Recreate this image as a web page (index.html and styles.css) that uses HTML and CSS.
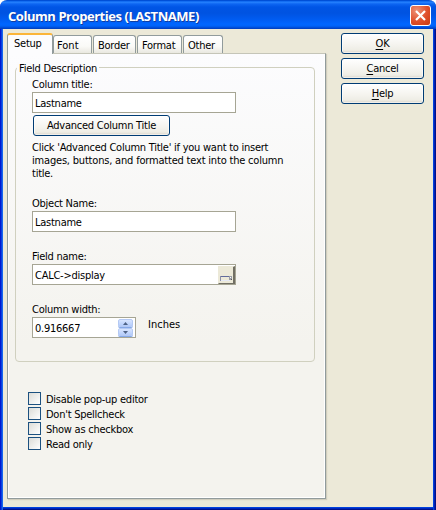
FILE: index.html
```html
<!DOCTYPE html>
<html lang="en">
<head>
<meta charset="utf-8">
<title>Column Properties (LASTNAME)</title>
<link rel="stylesheet" href="styles.css">
</head>
<body>
<div class="window">
  <header class="titlebar">
    <h1>Column Properties (LASTNAME)</h1>
    <button class="close" aria-label="Close"><svg width="13" height="13" viewBox="0 0 13 13"><path d="M2 2L11 11M11 2L2 11" stroke="#fff" stroke-width="2.2"/></svg></button>
  </header>
  <div class="content">
    <main>
      <nav class="tabs">
        <div class="tab active">Setup</div>
        <div class="tab font">Font</div>
        <div class="tab border">Border</div>
        <div class="tab format">Format</div>
        <div class="tab other">Other</div>
      </nav>
      <section class="panel">
        <div class="group">
          <div class="legend"><span>Field Description</span></div>
          <label class="label">Column title:</label>
          <div class="field">Lastname</div>
          <button class="btn advanced">Advanced Column Title</button>
          <p class="hint">Click 'Advanced Column Title' if you want to insert<br><span>images, buttons, and formatted text into the column</span><br>title.</p>
          <label class="label object">Object Name:</label>
          <div class="field">Lastname</div>
          <label class="label spaced">Field name:</label>
          <div class="field picker">CALC-&gt;display
            <span class="browse"><svg width="13" height="7" viewBox="0 0 13 7"><path d="M0 1.5H10" stroke="#626b9b"/><path d="M.5 1V6" stroke="#8c90a5"/><path d="M1 5.5H10" stroke="#e5e9f5"/><path d="M9 1h3v4h-3z" fill="#9a9da6"/><path d="M10 2h1v1h-1z" fill="#fff"/><path d="M11 4h1v1h-1z" fill="#555"/></svg></span>
          </div>
          <label class="label spaced">Column width:</label>
          <div class="width-row">
            <div class="field spinner">0.916667
              <span class="spin"><i><svg width="5" height="3" viewBox="0 0 5 3"><path d="M0 3L2.5 0L5 3z" fill="#4d6185"/></svg></i><i><svg width="5" height="3" viewBox="0 0 5 3"><path d="M0 0L2.5 3L5 0z" fill="#4d6185"/></svg></i></span>
            </div>
            <span class="unit">Inches</span>
          </div>
        </div>
        <div class="checks">
          <label><b></b><span>Disable pop-up editor</span></label>
          <label><b></b><span>Don't Spellcheck</span></label>
          <label><b></b><span>Show as checkbox</span></label>
          <label><b></b><span>Read only</span></label>
        </div>
      </section>
    </main>
    <aside>
      <button class="btn"><span><u>O</u>K</span></button>
      <button class="btn"><span><u>C</u>ancel</span></button>
      <button class="btn"><span><u>H</u>elp</span></button>
    </aside>
  </div>
</div>
</body>
</html>
```
FILE: styles.css
```css
* { box-sizing: border-box; }
body { margin: 0; background: #fff; font: 11px/13px "DejaVu Sans Condensed", "DejaVu Sans", sans-serif; font-stretch: condensed; letter-spacing: -0.25px; color: #000; }
button { font: inherit; letter-spacing: inherit; color: inherit; padding: 0; }
svg { display: block; }
.window { width: 436px; height: 510px; border-radius: 7px 7px 0 0; overflow: hidden; background: linear-gradient(90deg, #0019cf 0 1px, #0a3fe0 1px 2px, #1667ee 2px 3px, transparent 3px 433px, #0040dd 433px 434px, #0020b4 434px 435px, #00108a 435px), linear-gradient(#0042dd 0 1px, #0026bb 1px 2px, #00138c 2px) 0 507px / 436px 3px no-repeat, #ece9d8; }
.titlebar { height: 29px; display: flex; justify-content: space-between; padding: 5px 5px 0 8px; background: linear-gradient(#0046c8 0, #0058e6 1px, #2884ff 2px, #0d65f2 4px, #0055e5 7px, #0053e1 13px, #005bf0 19px, #0066ff 24px, #0063f8 26px, #0048d0 28px, #003db9 29px); }
h1 { margin: 0; font: bold 13px/22px "Open Sans", sans-serif; font-stretch: normal; letter-spacing: -0.45px; color: #fff; text-shadow: 1px 1px #123ea0; }
.close { width: 21px; height: 21px; border: 1px solid #fff; border-radius: 3px; display: grid; place-items: center; background: radial-gradient(circle at 30% 25%, #ed9278, #df4f2b 55%, #c93a11); }
.content { display: flex; height: 478px; justify-content: space-between; padding: 4px 12px 0 7px; }
main { width: 320px; }
.tabs { display: flex; height: 20px; align-items: flex-end; }
.tab { height: 18px; border: 1px solid #919b9c; border-bottom: 0; border-radius: 3px 3px 0 0; background: linear-gradient(#fff, #fafaf7 60%, #e9e8e0); padding: 3px 0 0 3px; margin-right: 1px; white-space: nowrap; }
.active { width: 46px; height: 21px; margin: 0 0 -1px; padding: 2px 0 0 6px; position: relative; background: #fcfcfe; border-top: 2px solid #fbb53a; }
.font { width: 39px; letter-spacing: 0; }
.border { width: 43px; padding-left: 4px; }
.format { width: 45px; padding-left: 4px; }
.other { width: 40px; padding-left: 4px; }
.panel { width: 319px; height: 446px; border: 1px solid #919b9c; border-top-color: #c5c5b8; background: linear-gradient(#fcfcfe, #f4f3ee 65%); box-shadow: inset -1px -1px #fff, inset 1px 0 #fff, 1px 1px 1px #d0cdbd; padding: 13px 0 0 7px; }
.group { width: 300px; height: 295px; border: 1px solid #d0d0bf; border-radius: 4px; padding-left: 16px; }
.legend { height: 13px; margin: -6px 0 0 -15px; }
.legend span { display: inline-block; height: 13px; padding: 0 2px; background: #fbfbfd; }
.label { display: block; height: 13px; margin: 3px 0 1px; }
.field { width: 204px; height: 21px; border: 1px solid #a6a594; background: #fff; padding: 4px 2px 0; }
.btn { width: 83px; height: 21px; border: 1px solid #003c74; border-radius: 3px; background: linear-gradient(#fff, #f5f4ef 55%, #eeede5 85%, #d9d4ca); box-shadow: inset 0 0 0 1px #ffffff90; display: flex; align-items: center; justify-content: center; }
.advanced { width: 137px; margin: 2px 0 0 1px; }
.hint { margin: 5px 0 0; white-space: nowrap; }
.hint span { letter-spacing: -0.19px; }
.object { margin-top: 17px; }
.spaced { margin-top: 18px; }
.picker, .spinner { display: flex; justify-content: space-between; }
.browse { width: 17px; height: 18px; margin: -3px -2px 0 0; border: 1px solid; border-color: #ece9d8 #716f64 #716f64 #ece9d8; border-right-width: 2px; border-bottom-width: 1px; background: #ece9d8; display: flex; padding: 8px 0 0 1px; }
.width-row { display: flex; }
.spinner { width: 104px; }
.spin { width: 16px; height: 19px; margin: -4px -1px 0 0; display: flex; flex-direction: column; gap: 1px; padding: 1px 0; }
.spin i { width: 15px; height: 8px; border: 1px solid #b4c9f4; border-radius: 2px; background: linear-gradient(#d8e5ff, #b4ccfa); display: grid; place-items: center; box-shadow: 0 1px #86a9e8; }
.unit { margin: 1px 0 0 12px; letter-spacing: 0; }
.checks { margin: 30px 0 0 13px; }
.checks label { height: 15px; display: flex; gap: 5px; }
.checks b { width: 13px; height: 13px; border: 1px solid #1c5180; background: linear-gradient(135deg, #dcdcd7, #fff); }
.checks span { margin-top: 1px; }
aside { width: 83px; display: flex; flex-direction: column; gap: 4px; }
u { text-underline-offset: 2px; }
```
